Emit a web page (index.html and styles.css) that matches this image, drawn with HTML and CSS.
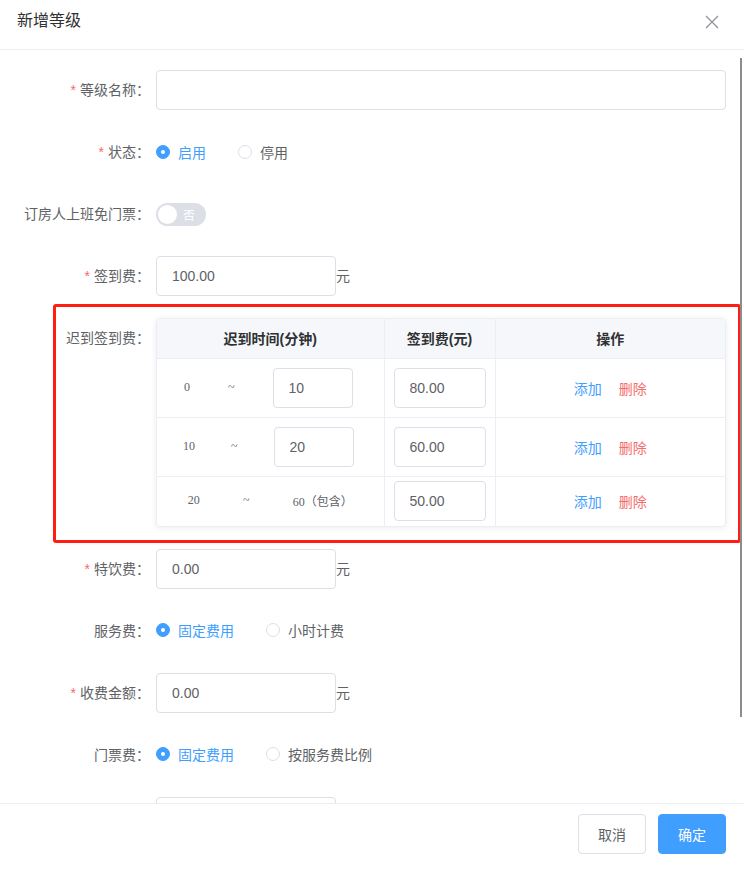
FILE: index.html
```html
<!DOCTYPE html>
<html>
<head>
<meta charset="utf-8">
<title>新增等级</title>
<link rel="stylesheet" href="styles.css">
</head>
<body>
<div class="dialog">
	<div class="dialog-header">
		<span class="dialog-title">新增等级</span>
		<span class="dialog-close">
			<svg width="14" height="14" viewBox="0 0 14 14"><path d="M1 1L13 13M13 1L1 13" stroke="#909399" stroke-width="1.3" fill="none"/></svg>
		</span>
	</div>
	<div class="dialog-body">
		<div class="form">
			<div class="form-item">
				<label class="item-label"><i class="req">*</i>等级名称：</label>
				<div class="item-cont"><input class="ipt ipt-full" type="text" value=""></div>
			</div>
			<div class="form-item">
				<label class="item-label"><i class="req">*</i>状态：</label>
				<div class="item-cont">
					<span class="radio on"><i></i>启用</span>
					<span class="radio"><i></i>停用</span>
				</div>
			</div>
			<div class="form-item">
				<label class="item-label">订房人上班免门票：</label>
				<div class="item-cont">
					<span class="switch"><i></i><em>否</em></span>
				</div>
			</div>
			<div class="form-item">
				<label class="item-label"><i class="req">*</i>签到费：</label>
				<div class="item-cont"><input class="ipt ipt-mid" type="text" value="100.00"><span class="unit">元</span></div>
			</div>
			<div class="form-item late">
				<label class="item-label">迟到签到费：</label>
				<div class="item-cont">
					<div class="late-table">
						<table>
							<thead>
								<tr>
									<th class="c1">迟到时间(分钟)</th>
									<th class="c2">签到费(元)</th>
									<th>操作</th>
								</tr>
							</thead>
							<tbody>
								<tr>
									<td class="c1"><div class="range"><span>0</span><span>~</span><input class="ipt ipt-min" type="text" value="10"></div></td>
									<td class="c2"><input class="ipt ipt-fee" type="text" value="80.00"></td>
									<td><div class="ops"><a class="add">添加</a><a class="del">删除</a></div></td>
								</tr>
								<tr>
									<td class="c1"><div class="range"><span>10</span><span>~</span><input class="ipt ipt-min" type="text" value="20"></div></td>
									<td class="c2"><input class="ipt ipt-fee" type="text" value="60.00"></td>
									<td><div class="ops"><a class="add">添加</a><a class="del">删除</a></div></td>
								</tr>
								<tr class="last">
									<td class="c1"><div class="range"><span>20</span><span>~</span><span>60（包含）</span></div></td>
									<td class="c2"><input class="ipt ipt-fee" type="text" value="50.00"></td>
									<td><div class="ops"><a class="add">添加</a><a class="del">删除</a></div></td>
								</tr>
							</tbody>
						</table>
					</div>
				</div>
			</div>
			<div class="form-item">
				<label class="item-label"><i class="req">*</i>特饮费：</label>
				<div class="item-cont"><input class="ipt ipt-mid" type="text" value="0.00"><span class="unit">元</span></div>
			</div>
			<div class="form-item">
				<label class="item-label">服务费：</label>
				<div class="item-cont">
					<span class="radio on"><i></i>固定费用</span>
					<span class="radio"><i></i>小时计费</span>
				</div>
			</div>
			<div class="form-item">
				<label class="item-label"><i class="req">*</i>收费金额：</label>
				<div class="item-cont"><input class="ipt ipt-mid" type="text" value="0.00"><span class="unit">元</span></div>
			</div>
			<div class="form-item">
				<label class="item-label">门票费：</label>
				<div class="item-cont">
					<span class="radio on"><i></i>固定费用</span>
					<span class="radio"><i></i>按服务费比例</span>
				</div>
			</div>
			<div class="form-item">
				<label class="item-label"></label>
				<div class="item-cont"><input class="ipt ipt-mid" type="text" value=""></div>
			</div>
		</div>
		<div class="scroll-bar"></div>
	</div>
	<div class="dialog-footer">
		<button class="btn">取消</button>
		<button class="btn btn-primary">确定</button>
	</div>
</div>
</body>
</html>
```

FILE: styles.css
```css
*{
	box-sizing: border-box;
}
html,body{
	margin: 0;
	padding: 0;
	background: #fff;
}
body{
	font-family: "Liberation Sans", "Noto Sans CJK SC", sans-serif;
	font-size: 14px;
	color: #606266;
}
.dialog{
	height: 100vh;
	display: flex;
	flex-direction: column;
	position: relative;
}
.dialog-header{
	height: 50px;
	border-bottom: 1px solid #ebeef5;
	display: flex;
	justify-content: space-between;
	padding: 10px 25px 0 17px;
}
.dialog-title{
	font-size: 16px;
	line-height: 22px;
	color: #303133;
}
.dialog-close{
	display: block;
	height: 14px;
	margin-top: 5px;
}
.dialog-body{
	flex: 1;
	overflow: hidden;
}
.form{
	padding: 20px 18px 0 0;
}
.form-item{
	display: flex;
	margin-bottom: 22px;
}
.item-label{
	width: 150px;
	margin-right: 6px;
	text-align: right;
	line-height: 40px;
	flex-shrink: 0;
	white-space: nowrap;
}
.req{
	font-style: normal;
	color: #f56c6c;
	margin-right: 4px;
}
.item-cont{
	flex: 1;
	display: flex;
	align-items: center;
	min-height: 40px;
}
.ipt{
	height: 40px;
	border: 1px solid #dcdfe6;
	border-radius: 4px;
	padding: 0 15px;
	font-family: "Liberation Sans", "Noto Sans CJK SC", sans-serif;
	font-size: 14px;
	color: #606266;
	outline: none;
	background: #fff;
}
.ipt-full{
	width: 100%;
}
.ipt-mid{
	width: 180px;
}
.ipt-min{
	width: 80px;
}
.ipt-fee{
	width: 92px;
}
.unit{
	line-height: 40px;
}
.radio{
	display: inline-flex;
	align-items: center;
	margin-right: 32px;
	margin-top: -1px;
	cursor: pointer;
}
.radio i{
	width: 14px;
	height: 14px;
	border-radius: 50%;
	border: 1px solid #dcdfe6;
	margin-right: 8px;
	position: relative;
}
.radio.on{
	color: #409eff;
}
.radio.on i{
	background: #409eff;
	border-color: #409eff;
}
.radio.on i:after{
	content: "";
	width: 4px;
	height: 4px;
	border-radius: 50%;
	background: #fff;
	position: absolute;
	left: 4px;
	top: 4px;
}
.switch{
	width: 50px;
	height: 23px;
	border-radius: 12px;
	background: #dcdfe6;
	display: flex;
	align-items: center;
	padding: 0 2px;
}
.switch i{
	width: 19px;
	height: 19px;
	border-radius: 50%;
	background: #fff;
}
.switch em{
	font-style: normal;
	font-size: 12px;
	color: #fff;
	margin-left: 6px;
}
/* 迟到签到费 */
.late{
	position: relative;
}
.late:after{
	content: "";
	position: absolute;
	left: 53px;
	right: -15px;
	top: -14px;
	bottom: -16px;
	border: 3px solid #ff1d12;
	border-radius: 3px;
	pointer-events: none;
}
.late .item-label{
	align-self: flex-start;
}
.late-table{
	width: 100%;
	border: 1px solid #ebeef5;
	border-radius: 4px;
	box-shadow: 0 1px 6px rgba(0,0,0,.08);
	overflow: hidden;
}
.late-table table{
	width: 100%;
	border-collapse: collapse;
}
.late-table th{
	height: 39px;
	background: #f5f7fa;
	color: #303133;
	font-weight: bold;
	font-size: 14px;
	border-bottom: 1px solid #ebeef5;
	padding: 0;
}
.late-table td{
	padding: 9px 9px;
	border-bottom: 1px solid #ebeef5;
	vertical-align: middle;
}
.late-table tr.last td{
	padding: 4px 9px 5px;
	border-bottom: none;
}
.late-table .c1{
	width: 227px;
	border-right: 1px solid #ebeef5;
}
.late-table .c2{
	width: 110px;
	border-right: 1px solid #ebeef5;
}
.late-table td.c1{
	padding-left: 8px;
	padding-right: 12px;
}
.range{
	display: flex;
	justify-content: space-around;
	align-items: center;
	font-family: "Liberation Serif", "Noto Sans CJK SC", serif;
	font-size: 12px;
	color: #606266;
}
.ops{
	display: flex;
	justify-content: center;
	gap: 17px;
	padding-top: 1px;
}
.ops a{
	cursor: pointer;
}
.ops .add{
	color: #409eff;
}
.ops .del{
	color: #f56c6c;
}
.scroll-bar{
	position: absolute;
	left: 740px;
	top: 58px;
	width: 2px;
	height: 659px;
	background: #8c8c8c;
}
.dialog-footer{
	border-top: 1px solid #ebeef5;
	padding: 10px 18px 17px;
	display: flex;
	justify-content: flex-end;
	gap: 12px;
}
.btn{
	width: 68px;
	height: 40px;
	border: 1px solid #dcdfe6;
	border-radius: 4px;
	background: #fff;
	color: #606266;
	font-family: "Liberation Sans", "Noto Sans CJK SC", sans-serif;
	font-size: 14px;
	cursor: pointer;
}
.btn-primary{
	background: #409eff;
	border-color: #409eff;
	color: #fff;
}
```
